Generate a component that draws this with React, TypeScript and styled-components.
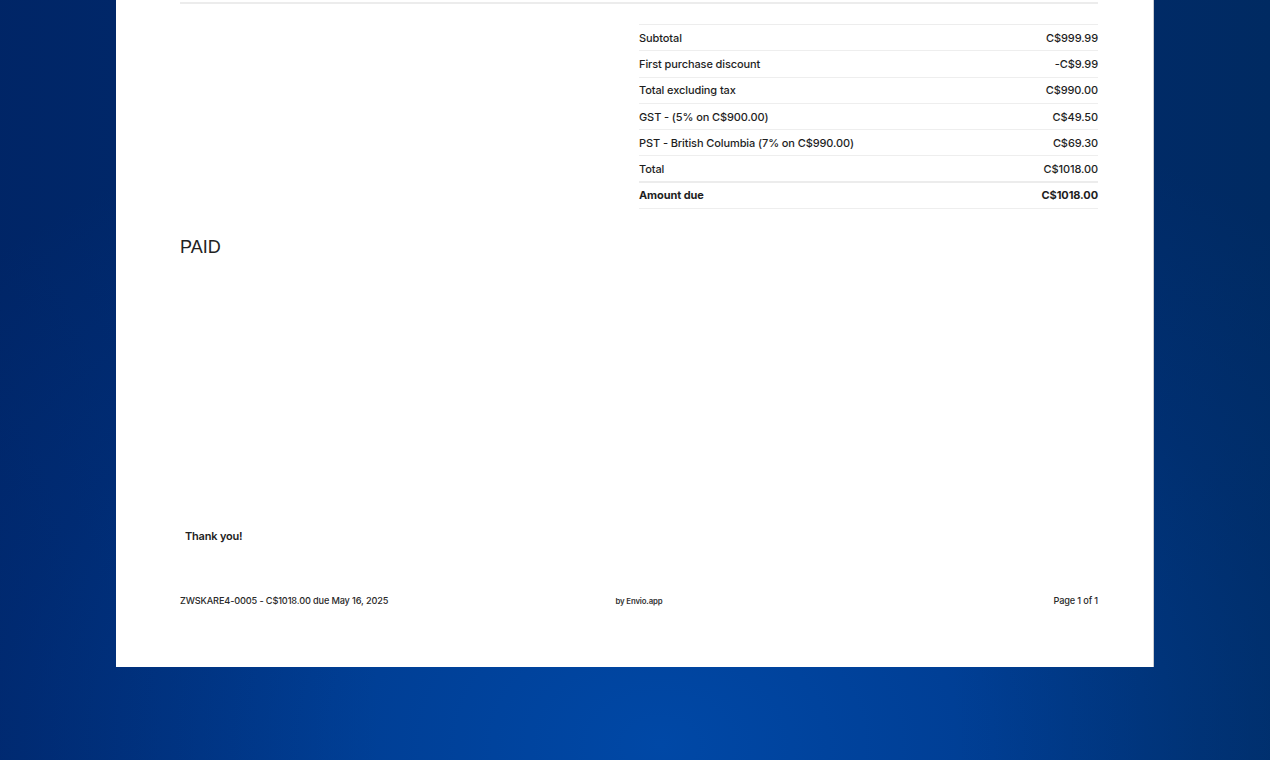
import React from "react";
import styled, { createGlobalStyle } from "styled-components";

const Global = createGlobalStyle`
  html, body { margin: 0; padding: 0; }
  body {
    width: 1270px;
    height: 760px;
    overflow: hidden;
    font-family: Inter, "Noto Sans", "Liberation Sans", sans-serif;
    background:
      linear-gradient(90deg, rgba(0, 20, 80, 0.25) 0%, rgba(0, 20, 80, 0) 30%, rgba(0, 40, 80, 0) 75%, rgba(0, 40, 70, 0.3) 100%),
      radial-gradient(ellipse 75% 90% at 52% 98%, #0048a6 0%, #003e94 35%, #00317c 70%, #002b6e 100%);
  }
`;

const Stage = styled.div`
  width: 1270px;
  height: 760px;
  display: flex;
  align-items: flex-start;
  padding-left: 116px;
  box-sizing: border-box;
`;

const Sheet = styled.div`
  width: 1038px;
  height: 667px;
  background: #ffffff;
  border-right: 1px solid #c9ccd2;
  padding: 2px 55px 0 64px;
  box-sizing: border-box;
  display: flex;
  flex-direction: column;
  color: #1f1f1f;
`;

const TopRule = styled.div`
  height: 2px;
  background: #ececec;
`;

const TotalsWrap = styled.div`
  display: flex;
  justify-content: flex-end;
  margin-top: 20px;
`;

const Totals = styled.div`
  width: 459px;
  border-top: 1px solid #ededed;
`;

const Row = styled.div<{ $strong?: boolean; $thick?: boolean }>`
  display: flex;
  justify-content: space-between;
  align-items: center;
  height: 26.3px;
  box-sizing: border-box;
  border-bottom: ${(p) => (p.$thick ? "2px solid #ececec" : "1px solid #eeeeee")};
  font-size: 11px;
  font-weight: ${(p) => (p.$strong ? 700 : 500)};
  color: #1e1e1e;
  letter-spacing: -0.1px;
`;

const Paid = styled.div`
  margin-top: 27px;
  font-family: "Liberation Sans", Arial, sans-serif;
  font-size: 18px;
  line-height: 22px;
  color: #222;
`;

const Spacer = styled.div`
  flex: 1;
`;

const Thanks = styled.div`
  padding-left: 5px;
  font-size: 11px;
  font-weight: 600;
  line-height: 16px;
  color: #222;
  letter-spacing: -0.2px;
`;

const Footer = styled.div`
  display: grid;
  grid-template-columns: 1fr auto 1fr;
  align-items: center;
  margin-top: 50px;
  margin-bottom: 59px;
  font-size: 9.2px;
  font-weight: 500;
  color: #2a2a2a;
  letter-spacing: -0.15px;
  line-height: 14px;
`;

const FootLeft = styled.div``;

const FootCenter = styled.div`
  font-size: 7.8px;
  font-weight: 600;
  color: #333;
`;

const FootRight = styled.div`
  text-align: right;
`;

const rows = [
  ["Subtotal", "C$999.99"],
  ["First purchase discount", "-C$9.99"],
  ["Total excluding tax", "C$990.00"],
  ["GST - (5% on C$900.00)", "C$49.50"],
  ["PST - British Columbia (7% on C$990.00)", "C$69.30"],
];

export default function App() {
  return (
    <>
      <Global />
      <Stage>
        <Sheet>
          <TopRule />
          <TotalsWrap>
            <Totals>
              {rows.map(([l, v]) => (
                <Row key={l}>
                  <span>{l}</span>
                  <span>{v}</span>
                </Row>
              ))}
              <Row $thick>
                <span>Total</span>
                <span>C$1018.00</span>
              </Row>
              <Row $strong>
                <span>Amount due</span>
                <span>C$1018.00</span>
              </Row>
            </Totals>
          </TotalsWrap>
          <Paid>PAID</Paid>
          <Spacer />
          <Thanks>Thank you!</Thanks>
          <Footer>
            <FootLeft>ZWSKARE4-0005 - C$1018.00 due May 16, 2025</FootLeft>
            <FootCenter>by Envio.app</FootCenter>
            <FootRight>Page 1 of 1</FootRight>
          </Footer>
        </Sheet>
      </Stage>
    </>
  );
}
